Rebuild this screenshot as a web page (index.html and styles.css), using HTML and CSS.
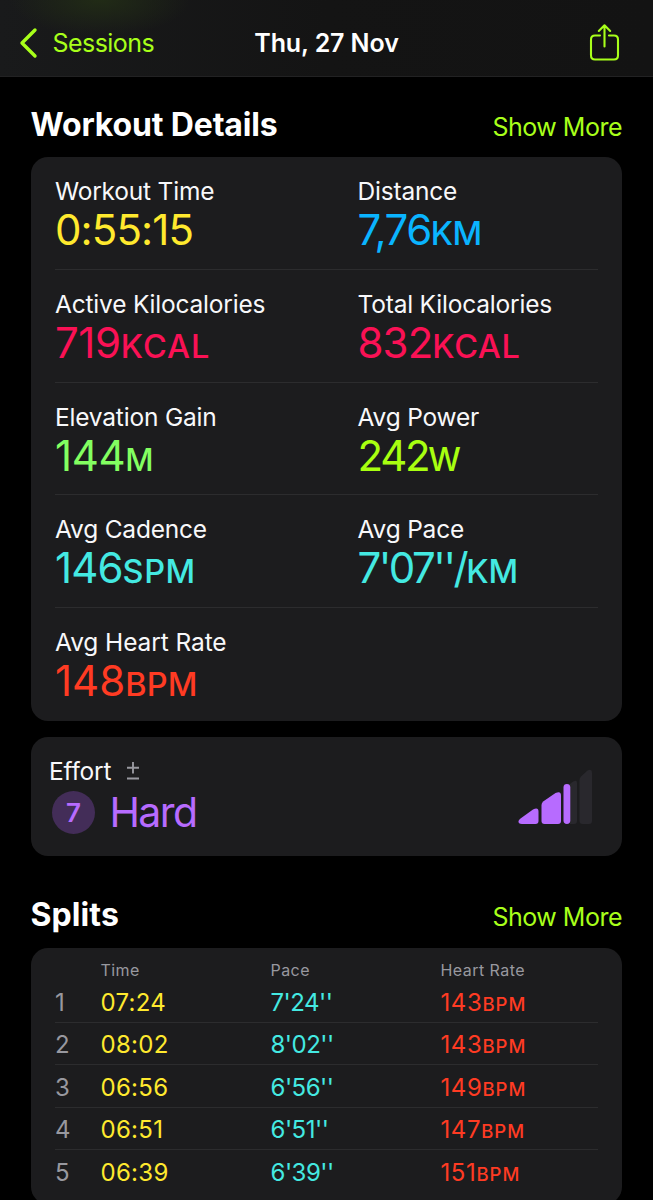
FILE: index.html
```html
<!DOCTYPE html>
<html lang="en">
<head>
<meta charset="utf-8">
<title>Workout</title>
<link rel="stylesheet" href="styles.css">
</head>
<body>
<header class="nav">
  <a class="back"><svg class="chevron" width="20" height="32" viewBox="0 0 20 32"><path d="M17 3 4 16l13 13" fill="none" stroke="currentColor" stroke-width="3.400" stroke-linecap="round" stroke-linejoin="round"/></svg><span class="back-label">Sessions</span></a>
  <h1 class="nav-title">Thu, 27 Nov</h1>
  <svg class="share" width="32" height="40" viewBox="0 0 32 40"><path d="M11 12.500H6q-4 0-4 4v16q0 4 4 4h19q4 0 4-4v-16q0-4-4-4h-5M15.500 23.500V2.500M9.800 8 15.500 2.300l5.700 5.700" fill="none" stroke="currentColor" stroke-width="2.100" stroke-linecap="round" stroke-linejoin="round"/></svg>
</header>
<main class="page">
  <div class="section-head"><h2 class="section-title">Workout Details</h2><a class="more">Show More</a></div>
  <section class="card details">
    <div class="row">
      <div class="metric"><div class="label">Workout Time</div><div class="value yellow time">0:55:15</div></div>
      <div class="metric"><div class="label">Distance</div><div class="value blue distance">7,76<span class="unit">KM</span></div></div>
    </div>
    <div class="row">
      <div class="metric"><div class="label">Active Kilocalories</div><div class="value pink active">719<span class="unit">KCAL</span></div></div>
      <div class="metric"><div class="label">Total Kilocalories</div><div class="value pink">832<span class="unit">KCAL</span></div></div>
    </div>
    <div class="row">
      <div class="metric"><div class="label">Elevation Gain</div><div class="value green climb">144<span class="unit">M</span></div></div>
      <div class="metric"><div class="label">Avg Power</div><div class="value lime power">242<span class="unit">W</span></div></div>
    </div>
    <div class="row">
      <div class="metric"><div class="label">Avg Cadence</div><div class="value cyan">146<span class="unit">SPM</span></div></div>
      <div class="metric"><div class="label">Avg Pace</div><div class="value cyan pace">7'07''/<span class="unit">KM</span></div></div>
    </div>
    <div class="row">
      <div class="metric"><div class="label heart">Avg Heart Rate</div><div class="value red beats">148<span class="unit">BPM</span></div></div>
    </div>
  </section>
  <section class="card effort">
    <div class="effort-text">
      <div class="effort-head"><span class="label">Effort</span><svg class="plusminus" width="14" height="20" viewBox="0 0 14 20"><path d="M7 1v11.500M1 6.700h12M1 17.500h12" fill="none" stroke="currentColor" stroke-width="1.900"/></svg></div>
      <div class="effort-level"><span class="badge">7</span><span class="value effort-name">Hard</span></div>
    </div>
    <svg class="bars" width="76" height="60" viewBox="0 0 76 60">
      <g fill="#29282d"><path d="M53 17q7-6 7-1v38q0 3-3 3h-4z"/><path d="M62.500 13q0-2 1.500-3.500l6.500-6q4.500-2 4.500 2V54q0 3-3 3h-6.500q-3 0-3-3z"/></g>
      <g fill="#b76bff"><path d="M3.500 51.500 16 42.500q5.500-2.500 5.500 2V54q0 3-3 3H5q-4 0-3.500-3 .5-1.500 2-2.500z"/><path d="M24.500 38q0-2.200 2-3.800l12-8.200q5.500-2.500 5.500 2.500V54q0 3-3 3H27.500q-3 0-3-3z"/><rect x="46.500" y="17" width="6.800" height="40" rx="3.400"/></g>
    </svg>
  </section>
  <div class="section-head splits-head"><h2 class="section-title splits-title">Splits</h2><a class="more">Show More</a></div>
  <section class="card splits">
    <div class="split head"><span></span><span>Time</span><span>Pace</span><span class="hr">Heart Rate</span></div>
    <div class="split"><span class="idx">1</span><span class="yellow">07:24</span><span class="cyan">7'24''</span><span class="red">143<span class="sunit">BPM</span></span></div>
    <div class="split"><span class="idx">2</span><span class="yellow">08:02</span><span class="cyan">8'02''</span><span class="red">143<span class="sunit">BPM</span></span></div>
    <div class="split"><span class="idx">3</span><span class="yellow">06:56</span><span class="cyan">6'56''</span><span class="red">149<span class="sunit">BPM</span></span></div>
    <div class="split"><span class="idx">4</span><span class="yellow">06:51</span><span class="cyan">6'51''</span><span class="red">147<span class="sunit">BPM</span></span></div>
    <div class="split"><span class="idx">5</span><span class="yellow">06:39</span><span class="cyan">6'39''</span><span class="red">151<span class="sunit">BPM</span></span></div>
  </section>
</main>
</body>
</html>
```
FILE: styles.css
```css
* { box-sizing: border-box; }
body { margin: 0; height: 1200px; overflow: hidden; background: #000; color: #fff; font-family: Inter, "Liberation Sans", sans-serif; font-weight: 400; }
h1, h2 { margin: 0; }
.nav { height: 77px; padding: 10px 18px 0; display: grid; grid-template-columns: 1fr auto 1fr; align-items: center; color: #a8ff1a; border-bottom: 1px solid #222223; background: radial-gradient(ellipse 90px 36px at 100px 0, #212b16, transparent), linear-gradient(90deg, #191a1b, #141414 50%, #131313); }
.back { display: flex; align-items: center; gap: 14.500px; }
.back-label { font-size: 25px; letter-spacing: -0.55px; }
.nav-title { color: #fff; font-size: 25px; font-weight: 600; letter-spacing: -0.1px; }
.share { justify-self: end; margin-right: 14px; }
.page { padding: 0 31px 0 30.500px; }
.section-head { height: 80px; padding-top: 27px; display: flex; justify-content: space-between; }
.section-title { font-size: 32px; line-height: 41px; font-weight: 700; letter-spacing: -0.15px; }
.more { color: #a8ff1a; font-size: 25px; line-height: 46px; letter-spacing: -0.5px; }
.card { background: #1c1c1e; border-radius: 17px; }
.details { height: 564px; padding: 0 24px 0 24.500px; }
.row { height: 112.8px; padding-top: 19px; display: grid; grid-template-columns: 302.500px 1fr; border-bottom: 1px solid #2c2c2e; }
.row:last-child { border-bottom: 0; }
.label { font-size: 24.500px; line-height: 30px; letter-spacing: -0.2px; color: #f8f8fa; }
.heart { letter-spacing: -0.1px; }
.value { font-size: 42px; line-height: 48px; letter-spacing: -0.900px; white-space: nowrap; }
.unit { font-size: 32.500px; font-weight: 500; letter-spacing: 0.600px; }
.distance { letter-spacing: -1.500px; }
.distance .unit { letter-spacing: -0.500px; }
.active { letter-spacing: -0.400px; }
.active .unit { letter-spacing: 1px; }
.power { letter-spacing: -2.300px; }
.climb { letter-spacing: -0.400px; }
.climb .unit { font-size: 31px; letter-spacing: 0; }
.beats { letter-spacing: 0; }
.beats .unit { letter-spacing: 0.200px; }
.pace { letter-spacing: -2.500px; }
.pace .unit { letter-spacing: 0; }
.yellow { color: #ffe92e; }
.blue { color: #0ab4ff; }
.pink { color: #fa1155; }
.green { color: #83ff61; }
.lime { color: #a8ff10; }
.cyan { color: #44e9e2; }
.red { color: #ff3b23; }
.effort { margin-top: 16px; height: 119px; padding: 19px 29px 0 18.500px; display: flex; justify-content: space-between; }
.effort-head { display: flex; align-items: center; gap: 15px; color: #98989f; }
.effort-level { display: flex; align-items: center; gap: 14.500px; padding-left: 3px; margin-top: 2px; color: #b76bff; }
.effort-name { font-size: 41px; line-height: 49px; letter-spacing: -1.600px; }
.badge { width: 43px; height: 43px; border-radius: 50%; background: #432d58; display: grid; place-items: center; font-size: 26px; font-weight: 600; }
.bars { margin-top: 11px; }
.splits-head { height: 92px; padding-top: 38px; }
.splits-title { line-height: 42px; letter-spacing: 0.1px; }
.splits { height: 256px; padding: 0 24px 0 24.500px; }
.split { height: 42.500px; padding-top: 7.500px; display: grid; grid-template-columns: 45.500px 170px 170px 1fr; align-items: baseline; font-size: 24px; line-height: 30px; border-bottom: 1px solid #2c2c2e; }
.split:last-child { border-bottom: 0; }
.split .yellow { letter-spacing: 0.300px; }
.split .cyan { letter-spacing: -0.500px; }
.split .red { letter-spacing: 0.600px; }
.split.head { height: 32px; padding-top: 12px; border: 0; color: #98989f; font-size: 16px; line-height: 20px; letter-spacing: 0.45px; }
.idx { color: #98989f; }
.split .sunit { font-size: 18.500px; font-weight: 500; letter-spacing: 1px; }
```
